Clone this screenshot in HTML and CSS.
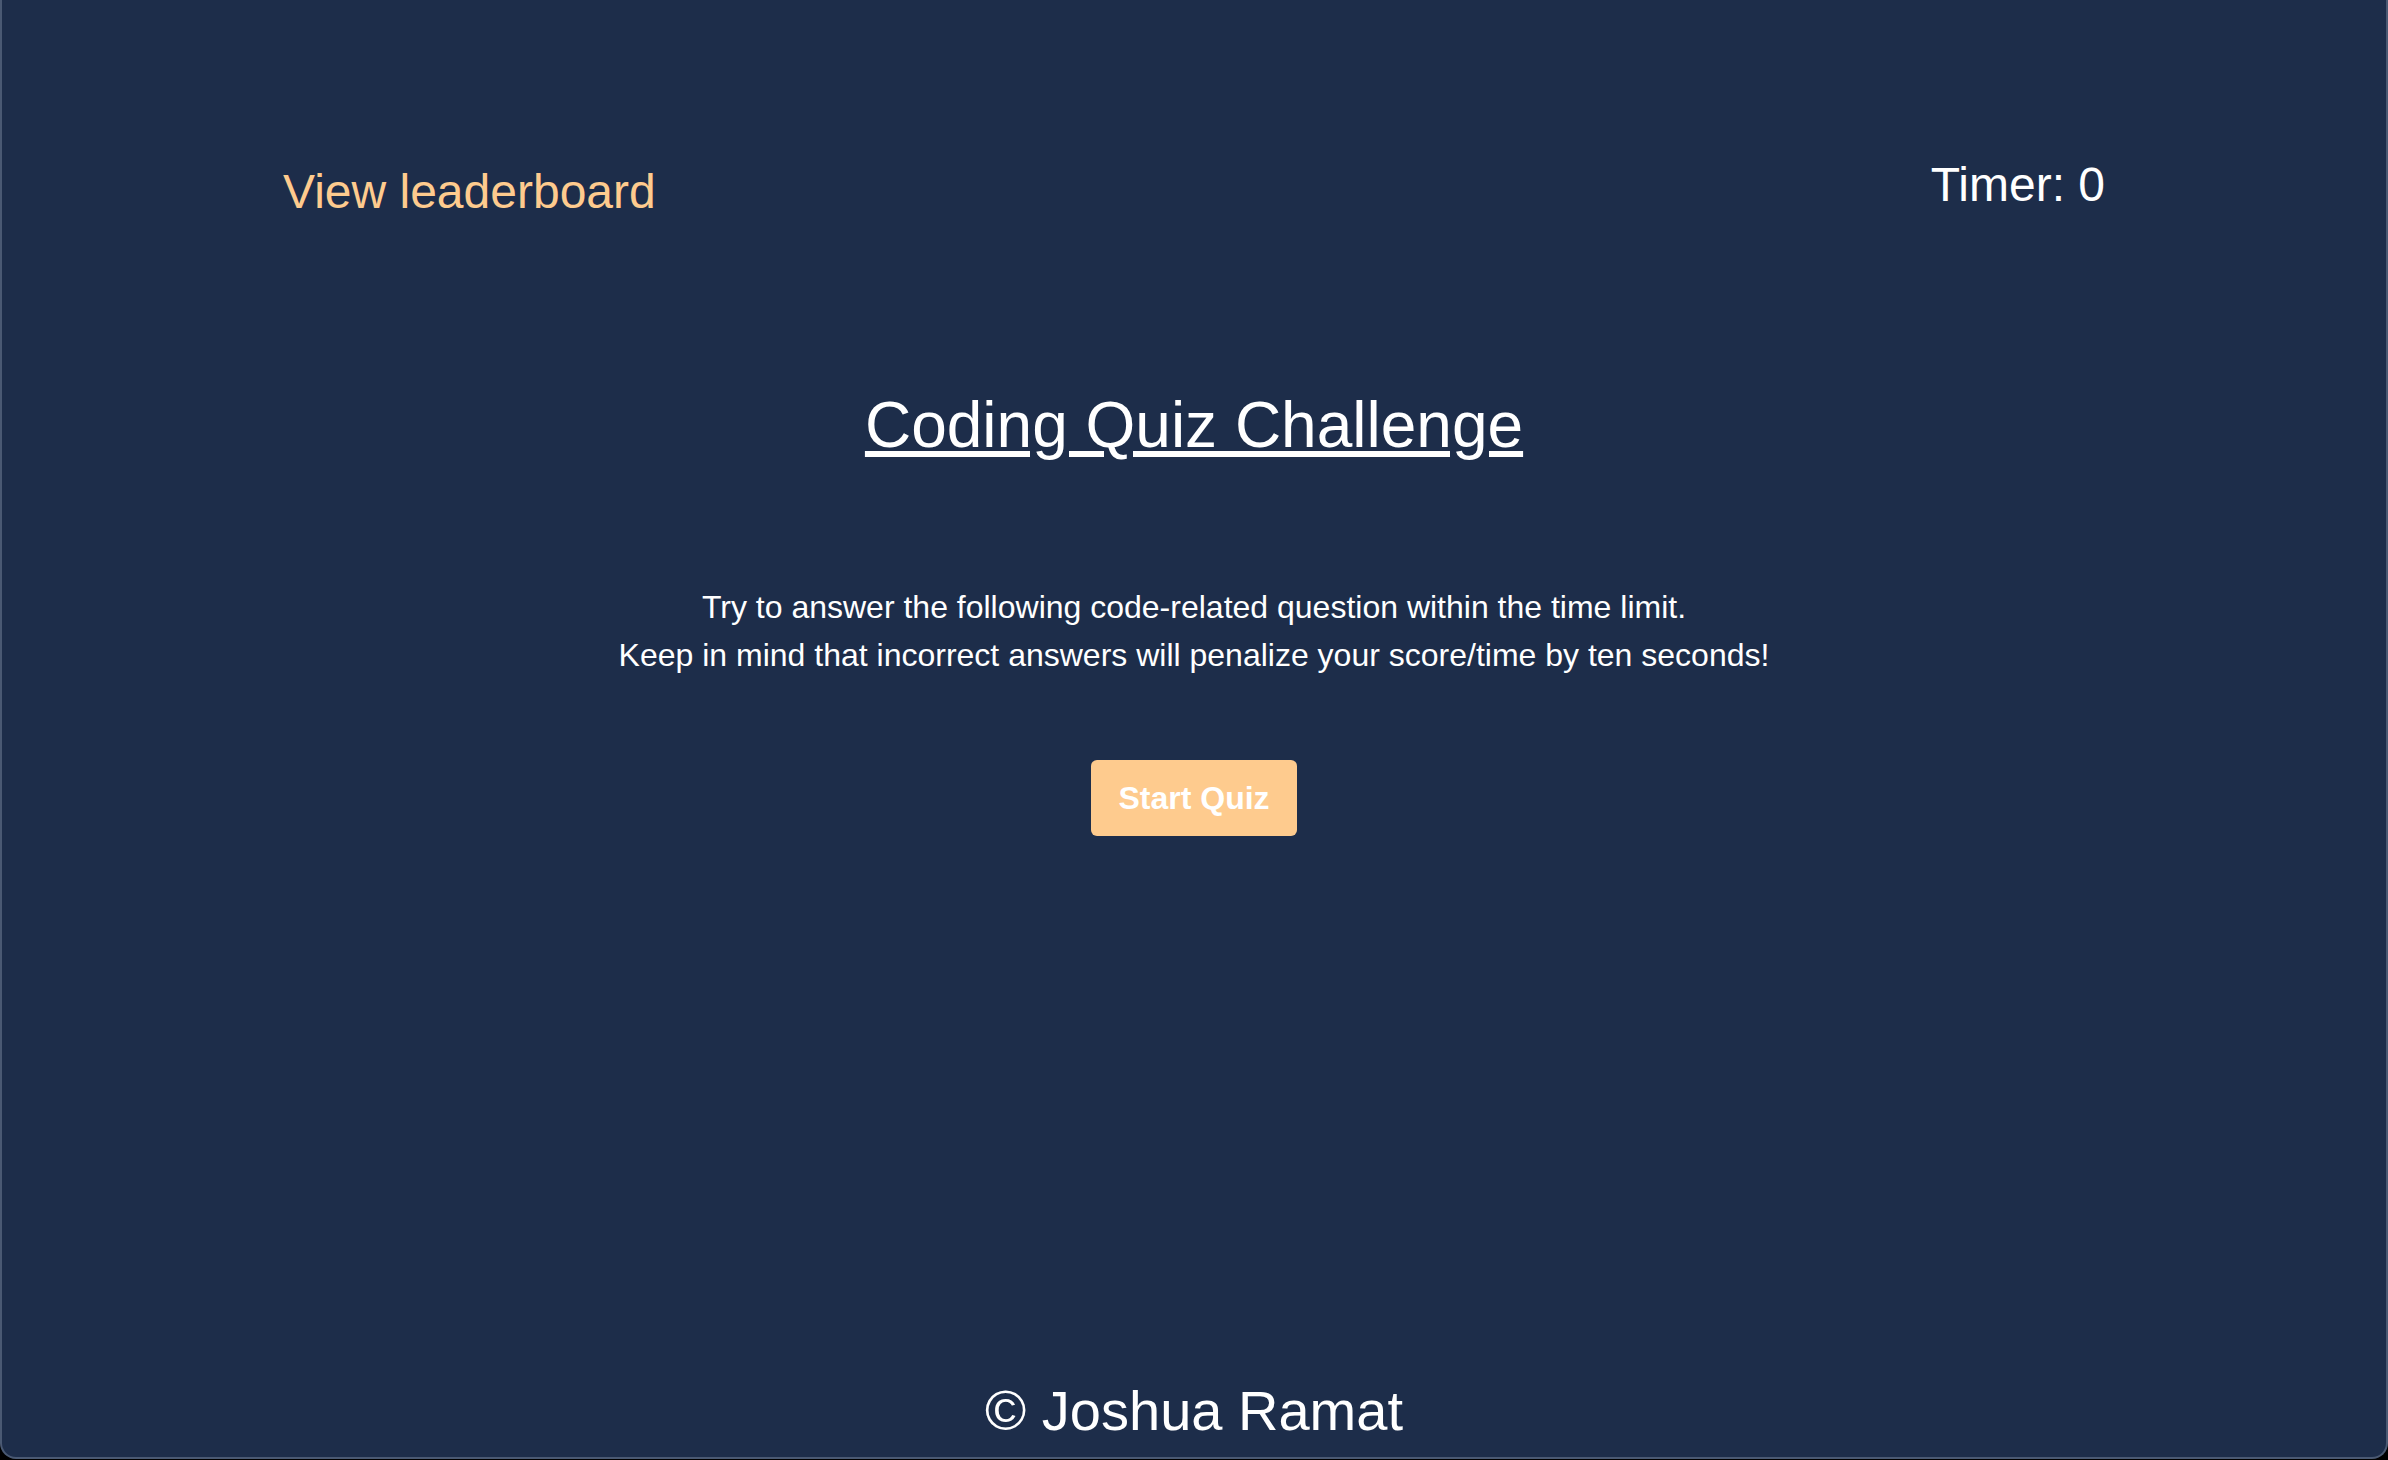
FILE: index.html
```html
<!DOCTYPE html>
<html lang="en">
<head>
<meta charset="utf-8">
<title>Coding Quiz Challenge</title>
<link rel="stylesheet" href="styles.css">
</head>
<body>
<div class="window">
  <header class="top-bar">
    <a class="leaderboard-link" href="#">View leaderboard</a>
    <div class="timer">Timer: 0</div>
  </header>
  <main class="intro">
    <h1 class="title">Coding Quiz Challenge</h1>
    <p class="description">Try to answer the following code-related question within the time limit.<br>Keep in mind that incorrect answers will penalize your score/time by ten seconds!</p>
    <button class="start-btn" type="button">Start Quiz</button>
  </main>
  <footer class="footer">© Joshua Ramat</footer>
</div>
</body>
</html>
```

FILE: styles.css
```css
html {
  margin: 0;
  padding: 0;
  background: #000;
}

body {
  margin: 0;
  padding: 0;
  font-family: "Liberation Sans", Arial, Helvetica, sans-serif;
  color: #ffffff;
}

.window {
  box-sizing: border-box;
  height: 1459px;
  background: #1d2d4a;
  border: 2px solid #4a5973;
  border-top: none;
  border-radius: 0 0 16px 16px;
  display: flex;
  flex-direction: column;
}

.top-bar {
  display: flex;
  justify-content: space-between;
  align-items: flex-start;
  padding: 157px 281px 0;
}

.leaderboard-link {
  font-size: 48px;
  line-height: 55px;
  color: #fecb8e;
  text-decoration: none;
  margin-top: 7px;
}

.timer {
  font-size: 48px;
  line-height: 55px;
  color: #ffffff;
}

.intro {
  display: flex;
  flex-direction: column;
  align-items: center;
  text-align: center;
}

.title {
  margin: 170px 0 0;
  font-size: 64px;
  line-height: 72px;
  font-weight: normal;
  text-decoration: underline;
}

.description {
  margin: 122px 0 0;
  font-size: 32px;
  line-height: 48px;
}

.start-btn {
  margin-top: 81px;
  height: 76px;
  padding: 0 27px;
  border: none;
  border-radius: 6px;
  background: #fecb8e;
  color: #ffffff;
  font-family: "Liberation Sans", Arial, Helvetica, sans-serif;
  font-size: 32px;
  font-weight: bold;
  cursor: pointer;
}

.footer {
  margin-top: auto;
  padding-bottom: 15px;
  text-align: center;
  font-size: 56px;
  line-height: 62px;
}
```
